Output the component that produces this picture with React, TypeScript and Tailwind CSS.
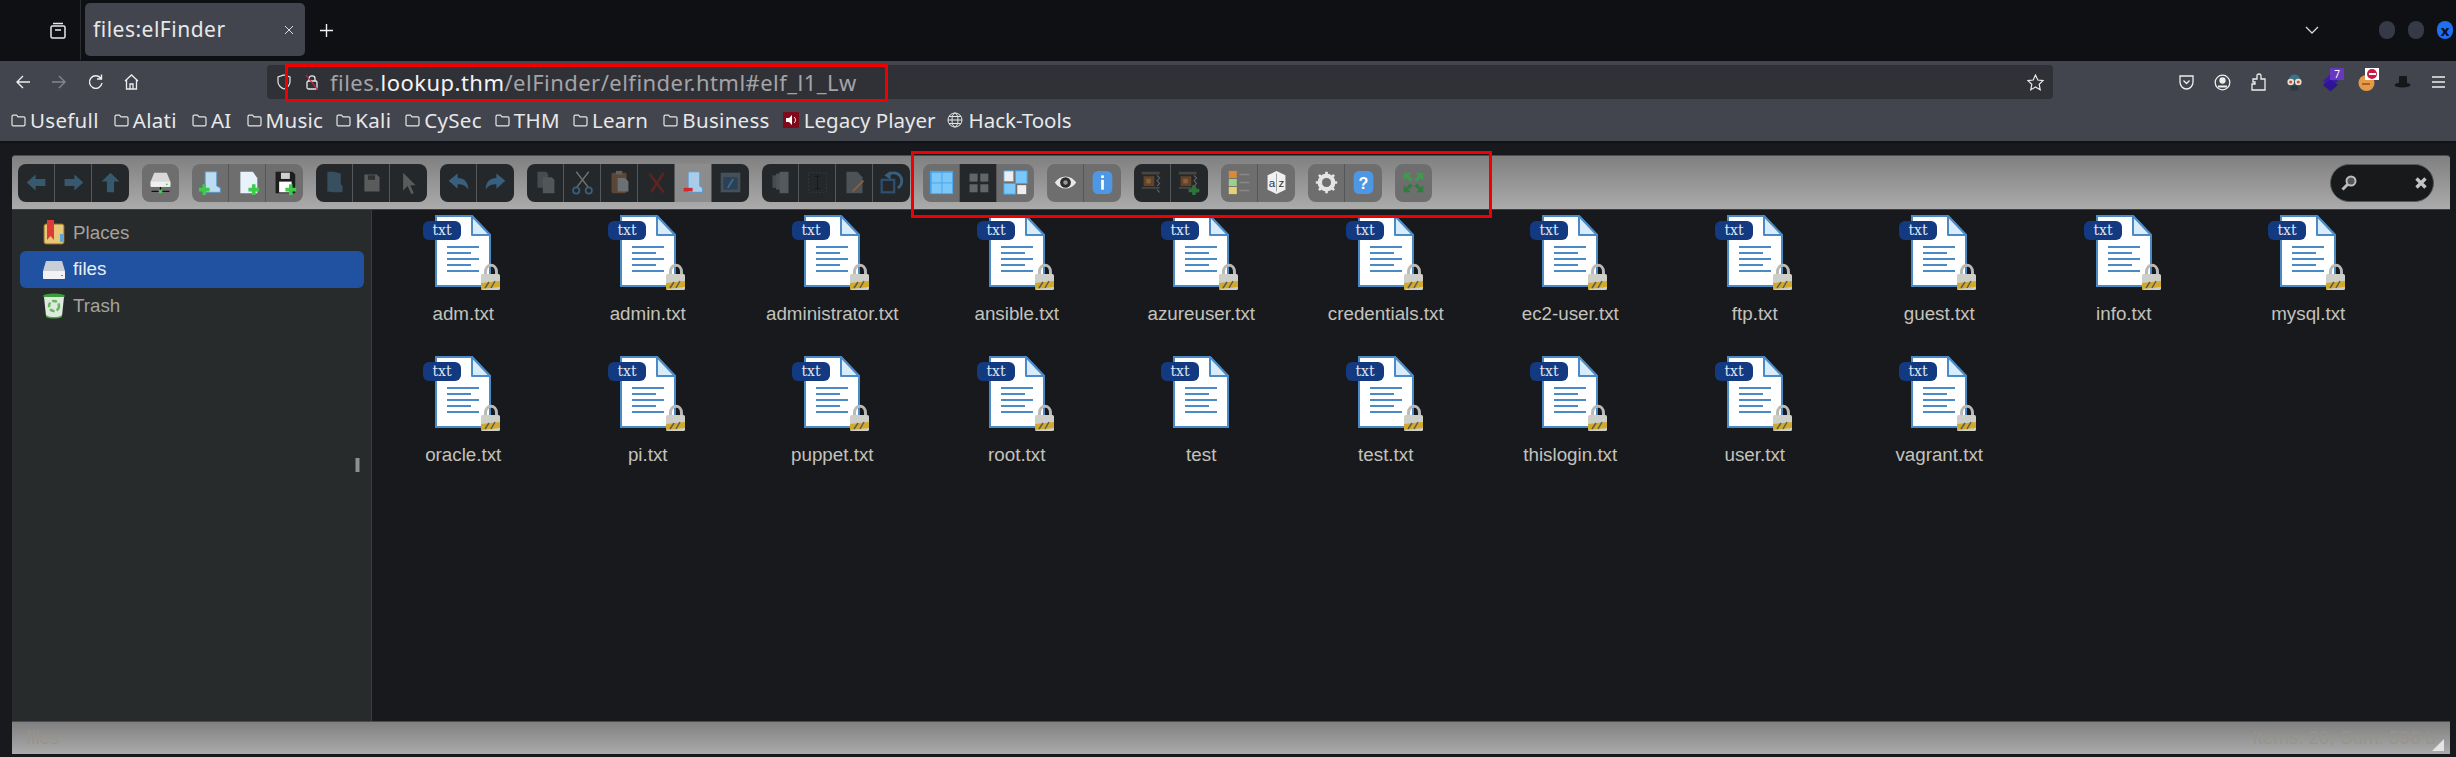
import React from "react";

const files = ["adm.txt","admin.txt","administrator.txt","ansible.txt","azureuser.txt","credentials.txt","ec2-user.txt","ftp.txt","guest.txt","info.txt","mysql.txt","oracle.txt","pi.txt","puppet.txt","root.txt","test","test.txt","thislogin.txt","user.txt","vagrant.txt"];

function FileIcon({ locked }: { locked: boolean }) {
  return (
    <svg width="80" height="76" viewBox="0 0 80 76">
      <path d="M13 1H49L67 20V71H13Z" fill="#fff" stroke="#4a8ac6" strokeWidth="2" />
      <path d="M49 1V20H67Z" fill="#d9ecfb" stroke="#4a8ac6" strokeWidth="2" strokeLinejoin="round" />
      <rect x="0" y="6" width="38" height="19" rx="6" fill="#133a80" />
      <text x="19" y="20" textAnchor="middle" fontSize="14" fill="#dfe6f2" fontFamily="'DejaVu Serif', serif">txt</text>
      {[31, 37, 43, 49, 55].map((y, i) => (
        <rect key={y} x="24" y={y} width={i % 2 ? 24 : 32} height="2" fill="#4a8ac6" />
      ))}
      {locked && (
        <g>
          <path d="M62.500 62V57C62.500 48 73.500 48 73.500 57V62" fill="none" stroke="#b9b9b6" strokeWidth="3" />
          <rect x="58" y="59" width="19" height="16" rx="1.500" fill="#cfcfca" />
          <path d="M58 68L77 66V72L58 74Z" fill="#d1a92b" />
          <path d="M62 73L66 67M68 73L72 66" stroke="#5c5c50" strokeWidth="1.500" />
        </g>
      )}
    </svg>
  );
}

type Kind = "off" | "on" | "active";
function Btn({ kind, children, last }: { kind: Kind; children: React.ReactNode; last?: boolean }) {
  const bg = kind === "off" ? "bg-[#24282b]" : kind === "active" ? "bg-[#8c8c8c]" : "bg-[#6e6e6e]";
  return (
    <div className={`w-[37px] h-full flex items-center justify-center shrink-0 ${bg} ${last ? "" : "border-r border-[#55585a]"}`}>
      <div className={kind === "off" ? "opacity-75 flex" : "flex"}>{children}</div>
    </div>
  );
}
function Group({ children }: { children: React.ReactNode }) {
  return <div className="flex h-[38px] rounded-[8px] overflow-hidden shrink-0">{children}</div>;
}
function Ico({ children }: { children: React.ReactNode }) {
  return <svg width="25" height="25" viewBox="0 0 28 28">{children}</svg>;
}

const dim = "#3d6a85";
const Left = () => <Ico><path d="M3 14L13 5V10H24V18H13V23Z" fill={dim} /></Ico>;
const Right = () => <Ico><path d="M25 14L15 5V10H4V18H15V23Z" fill={dim} /></Ico>;
const Up = () => <Ico><path d="M14 3L24 13H18V25H10V13H4Z" fill={dim} /></Ico>;
const Plus = ({ x, y }: { x: number; y: number }) => <path d={`M${x - 2} ${y - 6}h4v4h4v4h-4v4h-4v-4h-4v-4h4z`} fill="#3ecb4c" />;
const Drive = () => (
  <Ico>
    <path d="M7 3H21L25 13V18H3V13Z" fill="#d8d8d8" />
    <rect x="3" y="13" width="22" height="6" fill="#f0f0f0" />
    <circle cx="21" cy="16" r="1" fill="#3ecb4c" />
    <path d="M14 19V23M4 24H24" stroke="#111" strokeWidth="1.500" />
    <rect x="12" y="22" width="4" height="4" fill="#3ecb4c" />
  </Ico>
);
const FolderAdd = () => <Ico><path d="M8 2H21V18L25 20V25H8Z" fill="#bcdcf3" stroke="#5a97c9" /><Plus x={7} y={22} /></Ico>;
const FileAdd = () => <Ico><path d="M6 2H20L25 9V26H6Z" fill="#e8f2fa" /><Plus x={21} y={22} /></Ico>;
const SaveAdd = () => <Ico><path d="M4 2H23L26 5V26H4Z" fill="#1d1d1d" /><rect x="8" y="13" width="14" height="12" fill="#fff" /><rect x="10" y="3" width="10" height="7" fill="#cfcfcf" /><Plus x={21} y={22} /></Ico>;
const OpenDim = () => <Ico><path d="M6 2H13L21 4V16L23 18V25H13L6 24Z" fill="#3e5c72" /></Ico>;
const SaveDim = () => <Ico><path d="M6 5H20L23 8V24H6Z" fill="#6c6c6c" /><rect x="10" y="6" width="8" height="5" fill="#343434" /></Ico>;
const Cursor = () => <Ico><path d="M8 3L22 17H16L20 26L17 27L13 18L8 23Z" fill="#6c6c6c" /></Ico>;
const Undo = () => <Ico><path d="M3 12L13 4V9C20 9 25 13 25 22C22 17 18 16 13 16V21Z" fill="#3f729a" /></Ico>;
const Redo = () => <Ico><path d="M25 12L15 4V9C8 9 3 13 3 22C6 17 10 16 15 16V21Z" fill="#3f729a" /></Ico>;
const Copy = () => <Ico><path d="M5 2H15L17 5V20H5Z" fill="#52585c" /><path d="M11 8H21L24 11V26H11Z" fill="#60666a" /></Ico>;
const Cut = () => <Ico><path d="M7 2L21 20M21 2L7 20" stroke="#8b8f90" strokeWidth="1.500" /><circle cx="7" cy="23" r="3.500" fill="none" stroke="#3f729a" strokeWidth="2" /><circle cx="21" cy="23" r="3.500" fill="none" stroke="#3f729a" strokeWidth="2" /></Ico>;
const Paste = () => <Ico><rect x="5" y="3" width="17" height="23" rx="2" fill="#6f513c" /><rect x="10" y="1" width="7" height="4" fill="#77736c" /><path d="M12 9H20L24 13V24H12Z" fill="#85898b" /></Ico>;
const Del = () => <Ico><path d="M6 4L22 25M22 3L8 25" stroke="#6d2323" strokeWidth="3" /></Ico>;
const Rm = () => <Ico><path d="M8 2H21V18L24 20V25H8Z" fill="#a9cde8" stroke="#5a97c9" /><rect x="3" y="20" width="10" height="4" fill="#d9262a" /></Ico>;
const Empty = () => <Ico><rect x="3" y="3" width="22" height="22" fill="#4f5f6b" /><rect x="6" y="8" width="16" height="14" fill="#2c4a63" /><path d="M11 20L17 10" stroke="#4d7fa8" strokeWidth="2" /></Ico>;
const Dup = () => <Ico><path d="M5 6H14V20H5Z" fill="#52585c" /><path d="M9 4H18V22H9Z" fill="#5a6064" /><path d="M13 2H23V26H13Z" fill="#636a6e" /></Ico>;
const Rename = () => <Ico><rect x="4" y="3" width="20" height="22" fill="none" stroke="#3d4144" strokeWidth="1" strokeDasharray="2 2" /><path d="M14 7V21M11 7H17M11 21H17" stroke="#111" /></Ico>;
const Edit = () => <Ico><path d="M5 2H17L23 8V26H5Z" fill="#5a6064" /><path d="M12 24L24 12" stroke="#a8784e" strokeWidth="2" /></Ico>;
const Rotate = () => <Ico><rect x="3" y="11" width="14" height="14" fill="none" stroke="#2f5f88" strokeWidth="2.500" /><path d="M10 6A9 9 0 1 1 21 20" fill="none" stroke="#3f729a" strokeWidth="3" /><path d="M6 6L13 1V11Z" fill="#3f729a" /></Ico>;
const Tile = ({ x, y, c, s = 11 }: { x: number; y: number; c: string; s?: number }) => <rect x={x} y={y} width={s} height={s} fill={c} />;
const Large = () => <Ico><rect x="1" y="1" width="26" height="26" fill="#3fa5ee" /><Tile x={3} y={3} c="#7cc6f8" /><Tile x={15} y={3} c="#7cc6f8" /><Tile x={3} y={15} c="#7cc6f8" /><Tile x={15} y={15} c="#7cc6f8" /></Ico>;
const Small = () => <Ico><Tile x={4} y={4} c="#7a7a7a" s={9} /><Tile x={16} y={4} c="#7a7a7a" s={9} /><Tile x={4} y={16} c="#7a7a7a" s={9} /><Tile x={16} y={16} c="#7a7a7a" s={9} /></Ico>;
const Mixed = () => <Ico><rect x="1" y="1" width="11" height="12" fill="#eee" stroke="#3fa5ee" /><rect x="14" y="1" width="13" height="14" fill="#7cc6f8" stroke="#3fa5ee" /><rect x="1" y="15" width="13" height="12" fill="#7cc6f8" stroke="#3fa5ee" /><rect x="16" y="17" width="10" height="10" fill="#eee" /></Ico>;
const Eye = () => <Ico><path d="M2 14C8 5 20 5 26 14C20 23 8 23 2 14Z" fill="#e8e8e8" /><circle cx="14" cy="14" r="6" fill="#2c2c2c" /><circle cx="14" cy="14" r="2.500" fill="#999" /></Ico>;
const Info = () => <Ico><rect x="3" y="1" width="22" height="26" rx="6" fill="#4e97e4" /><rect x="12.500" y="6" width="3" height="3" fill="#fff" /><rect x="12.500" y="11" width="3" height="11" fill="#fff" /></Ico>;
const Arch = ({ add }: { add?: boolean }) => (
  <Ico>
    <rect x="2" y="2" width="20" height="3" fill="#55504a" />
    <rect x="4" y="7" width="12" height="11" fill="#7a4d2a" />
    <rect x="7" y="10" width="5" height="5" fill="#a5743f" />
    <rect x="2" y="19" width="20" height="2" fill="#55504a" />
    <path d="M19 6L22 9L19 12L22 15L19 18M19 22L22 25" stroke="#777" strokeWidth="1.200" fill="none" />
    {add && <path d="M17 17h4v4h4v4h-4v3h-4v-3h-4v-4h4z" fill="#2f8f3e" />}
  </Ico>
);
const ListI = () => <Ico><rect x="2" y="1" width="9" height="8" fill="#d88a3a" /><rect x="2" y="10" width="9" height="8" fill="#9bd08a" /><rect x="2" y="19" width="9" height="8" fill="#e8cf7a" /><path d="M14 5H25M14 14H25M14 23H25" stroke="#888" strokeWidth="1.500" /></Ico>;
const Sort = () => (
  <Ico>
    <path d="M14 1L24 6V22L14 27L4 22V6Z" fill="#f0f0f0" />
    <path d="M14 4V24" stroke="#999" strokeWidth="1" />
    <text x="14" y="19" textAnchor="middle" fontSize="13" fill="#333" fontFamily="'Liberation Sans', sans-serif">a z</text>
  </Ico>
);
const Gear = () => <Ico><circle cx="14" cy="14" r="7.500" fill="none" stroke="#e4e4e4" strokeWidth="5" /><path d="M14 2V26M2 14H26M5.500 5.500L22.500 22.500M22.500 5.500L5.500 22.500" stroke="#e4e4e4" strokeWidth="3" /><circle cx="14" cy="14" r="5" fill="#6e6e6e" /></Ico>;
const Help = () => <Ico><rect x="3" y="1" width="22" height="26" rx="6" fill="#4e97e4" /><text x="14" y="21" textAnchor="middle" fontSize="18" fontWeight="700" fill="#fff" fontFamily="'Liberation Sans', sans-serif">?</text></Ico>;
const Full = () => <Ico><path d="M3 3H12L9 6L13 11L10 13L6 9L3 12Z" fill="#3c9c4b" /><path d="M25 3H16L19 6L15 11L18 13L22 9L25 12Z" fill="#3c9c4b" /><path d="M3 25H11L8 22L13 18L10 15L6 20L3 17Z" fill="#2f7d3d" /><path d="M25 25H17L20 22L15 18L18 15L22 20L25 17Z" fill="#2f7d3d" /></Ico>;

function Folder() {
  return (
    <svg width="15" height="15" viewBox="0 0 15 15" className="shrink-0" fill="none" stroke="#e6e6e6" strokeWidth="1.200">
      <path d="M1 3.500C1 2.700 1.500 2.200 2.300 2.200H5.500L7 3.800H12.700C13.500 3.800 14 4.300 14 5V11.500C14 12.300 13.500 12.800 12.700 12.800H2.300C1.500 12.800 1 12.300 1 11.500Z" />
    </svg>
  );
}

const marks: [string, number][] = [["Usefull", 15], ["Alati", 15], ["AI", 15], ["Music", 13], ["Kali", 14], ["CySec", 13], ["THM", 13], ["Learn", 15], ["Business", 13]];

function Places() {
  return <svg width="24" height="26" viewBox="0 0 24 26"><rect x="2" y="4" width="20" height="20" rx="2" fill="#e8c878" stroke="#8d6525" /><path d="M5 0H12V20L8.500 16L5 20Z" fill="#dd3c36" /><rect x="18" y="14" width="3" height="8" fill="#5ba5d8" /></svg>;
}
function DriveSide() {
  return <svg width="24" height="20" viewBox="0 0 24 20"><path d="M4 1H20L23 11V17C23 18 22 19 21 19H3C2 19 1 18 1 17V11Z" fill="#c9cdd6" /><rect x="1" y="11" width="22" height="8" rx="1" fill="#f1f2f4" /><rect x="19" y="15" width="2" height="1" fill="#4caf50" /></svg>;
}
function TrashIco() {
  return <svg width="24" height="26" viewBox="0 0 24 26"><ellipse cx="12" cy="3" rx="11" ry="2.500" fill="#3f9c3a" /><path d="M2 4H22L20 23C20 25 4 25 4 23Z" fill="#dfeadf" /><path d="M4 22C8 25 16 25 20 22L20 24C16 26 8 26 4 24Z" fill="#4aa53f" /><circle cx="12" cy="13" r="5" fill="none" stroke="#67b85d" strokeWidth="2.500" strokeDasharray="5 2" /></svg>;
}

export default function App() {
  return (
    <div className="relative w-[2456px] h-[757px] overflow-hidden bg-[#17191c] flex flex-col font-['Liberation_Sans',sans-serif]">
      {/* tab strip */}
      <div className="h-[61px] bg-[#0e1014] flex items-start shrink-0 text-[#e8e8ea] font-['Noto_Sans',sans-serif]">
        <div className="w-[81px] h-[60px] border-r border-[#2c2e33] flex items-center justify-end pr-[14px]">
          <svg width="16" height="18" viewBox="0 0 16 18" fill="none" stroke="#e8e8ea" strokeWidth="1.500">
            <rect x="1" y="5" width="14" height="12" rx="1.500" />
            <path d="M3 2.500H13M5 9H11" />
          </svg>
        </div>
        <div className="ml-[4px] mt-[3px] w-[220px] h-[53px] bg-[#42454d] rounded-[5px] flex items-center pl-[8px] pr-[11px]">
          <span className="text-[21px] tracking-[0.5px] leading-none">files:elFinder</span>
          <svg className="ml-auto" width="10" height="10" viewBox="0 0 10 10" stroke="#dcdce0" strokeWidth="1"><path d="M1 1L9 9M9 1L1 9" /></svg>
        </div>
        <svg className="ml-[15px] mt-[24px]" width="13" height="13" viewBox="0 0 13 13" stroke="#f0f0f0" strokeWidth="1.400"><path d="M6.500 0V13M0 6.500H13" /></svg>
        <svg className="ml-[1972px] mt-[26px]" width="14" height="8" viewBox="0 0 14 8" fill="none" stroke="#d8d8d8" strokeWidth="1.300"><path d="M1 1L7 7L13 1" /></svg>
        <div className="ml-[60px] mt-[21px] flex gap-[13px]">
          <div className="w-[16px] h-[18px] rounded-full bg-[#353a46]" />
          <div className="w-[16px] h-[18px] rounded-full bg-[#353a46]" />
          <div className="w-[16px] h-[18px] rounded-full bg-[#1f6ff0] text-[#07101f] text-[15px] leading-[18px] font-bold text-center">x</div>
        </div>
      </div>

      {/* nav bar */}
      <div className="h-[82px] bg-[#42454d] border-b-2 border-[#111317] shrink-0 flex flex-col text-[#eeeef0] font-['Noto_Sans',sans-serif]">
        <div className="h-[38px] flex items-center shrink-0 pt-[4px]">
          <svg className="ml-[16px]" width="14" height="14" viewBox="0 0 14 14" fill="none" stroke="#eee" strokeWidth="1.400"><path d="M14 7H1M7 1L1 7L7 13" /></svg>
          <svg className="ml-[22px]" width="14" height="14" viewBox="0 0 14 14" fill="none" stroke="#85878d" strokeWidth="1.400"><path d="M0 7H13M7 1L13 7L7 13" /></svg>
          <svg className="ml-[22px]" width="15" height="16" viewBox="0 0 15 16" fill="none" stroke="#eee" strokeWidth="1.400"><path d="M13 4.500A6.300 6.300 0 1 0 14 9M13.500 0.500V5H9" /></svg>
          <svg className="ml-[21px]" width="15" height="16" viewBox="0 0 15 16" fill="none" stroke="#eee" strokeWidth="1.300"><path d="M1 7L7.500 1L14 7M2.500 6V15H12.500V6M6 15V10H9V15" /></svg>
          <div className="ml-[128px] w-[1786px] h-[34px] bg-[#303136] rounded-[4px] flex items-center pl-[10px] pr-[9px] text-[#a3a4a9]">
            <svg width="14" height="16" viewBox="0 0 14 16" fill="none" stroke="#e6e6e6" strokeWidth="1.200" className="shrink-0"><path d="M7 1L13 3V8C13 11 10 14 7 15C4 14 1 11 1 8V3Z" /></svg>
            <svg className="ml-[14px] shrink-0" width="14" height="17" viewBox="0 0 14 17" fill="none" stroke="#e8e8e8" strokeWidth="1.300"><path d="M4 7V4.500C4 1 10 1 10 4.500V7" /><rect x="2" y="7" width="10" height="8" rx="1.500" /><path d="M1 1L13 16" stroke="#d6204a" strokeWidth="1.200" /></svg>
            <span className="ml-[11px] text-[22px] tracking-[0.47px] leading-none whitespace-nowrap">files.<span className="text-[#f4f4f6]">lookup.thm</span>/elFinder/elfinder.html#elf_l1_Lw</span>
            <svg className="ml-auto shrink-0" width="17" height="17" viewBox="0 0 17 17" fill="none" stroke="#e6e6e6" strokeWidth="1.200"><path d="M8.500 1L10.800 6L16 6.600L12.200 10.200L13.200 15.800L8.500 13L3.800 15.800L4.800 10.200L1 6.600L6.200 6Z" /></svg>
          </div>
          <div className="ml-[125px] flex items-center gap-[19px]">
            <svg width="17" height="17" viewBox="0 0 17 17" fill="none" stroke="#eee" strokeWidth="1.300"><path d="M2 2H15V8C15 12 12 15 8.500 15C5 15 2 12 2 8Z" /><path d="M5.500 6.500L8.500 9.500L11.500 6.500" /></svg>
            <svg width="17" height="17" viewBox="0 0 17 17" fill="none" stroke="#eee" strokeWidth="1.300"><circle cx="8.500" cy="8.500" r="7.300" /><circle cx="8.500" cy="6.500" r="2.500" fill="#eee" /><path d="M4 12.500H13" strokeWidth="2" /></svg>
            <svg width="17" height="18" viewBox="0 0 17 18" fill="none" stroke="#eee" strokeWidth="1.300"><path d="M3 6H7V2.500C7 0.500 11 0.500 11 2.500V6H15V17H2V11H5V9H3Z" /></svg>
            <svg width="17" height="20" viewBox="0 0 18 20"><path d="M3 8C3 0 15 0 15 8V10H3Z" fill="#3d7286" /><circle cx="5" cy="10" r="3.500" fill="#e9e0d8" /><circle cx="13" cy="10" r="3.500" fill="#e9e0d8" /><circle cx="5" cy="10" r="1.700" fill="#c9502c" /><circle cx="13" cy="10" r="1.700" fill="#c9502c" /><rect x="5" y="14" width="8" height="5" fill="#2b3b44" /></svg>
            <div className="relative w-[17px] h-[20px]">
              <svg width="17" height="20" viewBox="0 0 18 20"><path d="M9 2L17 9L9 15L1 9Z" fill="#3a1bb0" /><path d="M9 8L17 13L9 20L1 13Z" fill="#2f1591" /></svg>
              <div className="absolute left-[8px] top-[-4px] w-[14px] h-[12px] bg-[#6938c0] text-white text-[10px] leading-[12px] text-center">7</div>
            </div>
            <div className="relative w-[17px] h-[20px]">
              <svg width="17" height="18" viewBox="0 0 17 18" className="mt-[2px]"><circle cx="8.500" cy="9" r="8" fill="#e59a46" /><path d="M4 10H12" stroke="#a8622a" strokeWidth="2" /></svg>
              <div className="absolute left-[7px] top-[-4px] w-[14px] h-[12px] bg-white flex items-center justify-center"><div className="w-[10px] h-[10px] rounded-full bg-[#c91a44] flex items-center justify-center"><div className="w-[7px] h-[2px] bg-white" /></div></div>
            </div>
            <svg width="17" height="14" viewBox="0 0 17 14"><rect x="5" y="1" width="8" height="8" rx="1" fill="#16171a" /><ellipse cx="8.500" cy="10" rx="8" ry="2.500" fill="#16171a" /></svg>
            <svg width="17" height="12" viewBox="0 0 17 12" stroke="#eee" strokeWidth="1.300"><path d="M2 1H15M2 6H15M2 11H15" /></svg>
          </div>
        </div>
        <div className="h-[42px] flex items-center pl-[11px] text-[20.500px] tracking-[0.3px] leading-none whitespace-nowrap text-[#e8e8ea]">
          {marks.map(([m, g]) => (
            <div key={m} className="flex items-center gap-[4px]" style={{ marginRight: g }}>
              <Folder />
              <span>{m}</span>
            </div>
          ))}
          <div className="flex items-center gap-[5px] mr-[12px]">
            <div className="w-[16px] h-[16px] bg-[#7e0a1c] flex items-center justify-center">
              <svg width="12" height="12" viewBox="0 0 12 12" fill="#fff"><path d="M1 4H4L7 1V11L4 8H1Z" /><path d="M9 3C11 5 11 7 9 9" stroke="#fff" fill="none" /></svg>
            </div>
            <span className="tracking-normal">Legacy Player</span>
          </div>
          <div className="flex items-center gap-[5px]">
            <svg width="16" height="16" viewBox="0 0 16 16" fill="none" stroke="#e6e6e6" strokeWidth="1"><circle cx="8" cy="8" r="7" /><ellipse cx="8" cy="8" rx="3" ry="7" /><path d="M1 8H15M2 4.500H14M2 11.500H14" /></svg>
            <span className="tracking-normal">Hack-Tools</span>
          </div>
        </div>
      </div>

      {/* elFinder window */}
      <div className="ml-[12px] mt-[12px] w-[2438px] h-[599px] flex flex-col border-t border-[#4a4d52] rounded-t-[3px] overflow-hidden">
        <div className="h-[54px] shrink-0 bg-gradient-to-b from-[#808080] to-[#ababab] border-b border-[#3c3e40] flex items-center pl-[6px] pr-[16px] gap-[13px]">
          <Group><Btn kind="off"><Left /></Btn><Btn kind="off"><Right /></Btn><Btn kind="off" last><Up /></Btn></Group>
          <Group><Btn kind="on" last><Drive /></Btn></Group>
          <Group><Btn kind="on"><FolderAdd /></Btn><Btn kind="on"><FileAdd /></Btn><Btn kind="on" last><SaveAdd /></Btn></Group>
          <Group><Btn kind="off"><OpenDim /></Btn><Btn kind="off"><SaveDim /></Btn><Btn kind="off" last><Cursor /></Btn></Group>
          <Group><Btn kind="off"><Undo /></Btn><Btn kind="off" last><Redo /></Btn></Group>
          <Group><Btn kind="off"><Copy /></Btn><Btn kind="off"><Cut /></Btn><Btn kind="off"><Paste /></Btn><Btn kind="off"><Del /></Btn><Btn kind="active"><Rm /></Btn><Btn kind="off" last><Empty /></Btn></Group>
          <Group><Btn kind="off"><Dup /></Btn><Btn kind="off"><Rename /></Btn><Btn kind="off"><Edit /></Btn><Btn kind="off" last><Rotate /></Btn></Group>
          <Group><Btn kind="on"><Large /></Btn><Btn kind="off"><Small /></Btn><Btn kind="on" last><Mixed /></Btn></Group>
          <Group><Btn kind="on"><Eye /></Btn><Btn kind="on" last><Info /></Btn></Group>
          <Group><Btn kind="off"><Arch /></Btn><Btn kind="off" last><Arch add /></Btn></Group>
          <Group><Btn kind="on"><ListI /></Btn><Btn kind="on" last><Sort /></Btn></Group>
          <Group><Btn kind="on"><Gear /></Btn><Btn kind="on" last><Help /></Btn></Group>
          <Group><Btn kind="on" last><Full /></Btn></Group>
          <div className="ml-auto w-[104px] h-[38px] rounded-[19px] bg-[#18191b] border border-[#55585a] flex items-center justify-between pl-[10px] pr-[6px] shrink-0">
            <svg width="16" height="16" viewBox="0 0 16 16" fill="none"><circle cx="10" cy="6" r="4.500" fill="#555" stroke="#bcbcbc" strokeWidth="2" /><path d="M7 9L1.500 14.500" stroke="#bcbcbc" strokeWidth="3" /></svg>
            <svg width="12" height="12" viewBox="0 0 12 12" stroke="#c4c4c4" strokeWidth="3.400"><path d="M1.500 1.500L10.500 10.500M10.500 1.500L1.500 10.500" /></svg>
          </div>
        </div>

        <div className="flex-1 flex min-h-0">
          <div className="relative w-[360px] shrink-0 bg-[#272b2c] border-r border-[#3a3d40] pt-[5px] pl-[8px] pr-[7px] text-[18.800px] text-[#a5a29b]">
            {[["Places", <Places key="p" />], ["files", <DriveSide key="d" />], ["Trash", <TrashIco key="t" />]].map(([t, ic], i) => (
              <div key={String(t)} className={`flex items-center rounded-[6px] ${i === 1 ? "bg-[#2052a1] text-[#e8eef6] h-[37px]" : "h-[36px]"}`}>
                <div className="w-[53px] pl-[22px] flex items-center justify-start shrink-0">{ic}</div>
                <span>{t}</span>
              </div>
            ))}
            <div className="absolute right-[11px] top-[248px] w-[5px] h-[14px] bg-[#8e9090] border-x border-[#5a5c5d]" />
          </div>
          <div className="flex-1 bg-[#17191c] pt-[5px] -ml-px">
            <div className="grid grid-cols-[repeat(11,184.500px)] auto-rows-[141px]">
              {files.map((f) => (
                <div key={f} className="flex flex-col items-center">
                  <FileIcon locked={f !== "test"} />
                  <span className="mt-[12px] text-[18.800px] leading-[22px] text-[#c4c2bc]">{f}</span>
                </div>
              ))}
            </div>
          </div>
        </div>

        <div className="relative h-[33px] shrink-0 bg-gradient-to-b from-[#808080] to-[#ababab] border-t border-[#4a4c4e] flex items-center justify-between pl-[14px] pr-[14px] text-[18.800px] text-[#97948a]">
          <span>files</span>
          <span>Items: 20, Sum: 596 b</span>
          <svg className="absolute right-[6px] bottom-[3px]" width="12" height="12" viewBox="0 0 12 12"><path d="M12 0V12H0Z" fill="#e4e4e4" /></svg>
        </div>
      </div>

      {/* annotation boxes */}
      <div className="absolute left-[285px] top-[64px] w-[603px] h-[38px] border-[3px] border-[#f00000]" />
      <div className="absolute left-[911px] top-[151px] w-[581px] h-[67px] border-[3px] border-[#f00000]" />
    </div>
  );
}
